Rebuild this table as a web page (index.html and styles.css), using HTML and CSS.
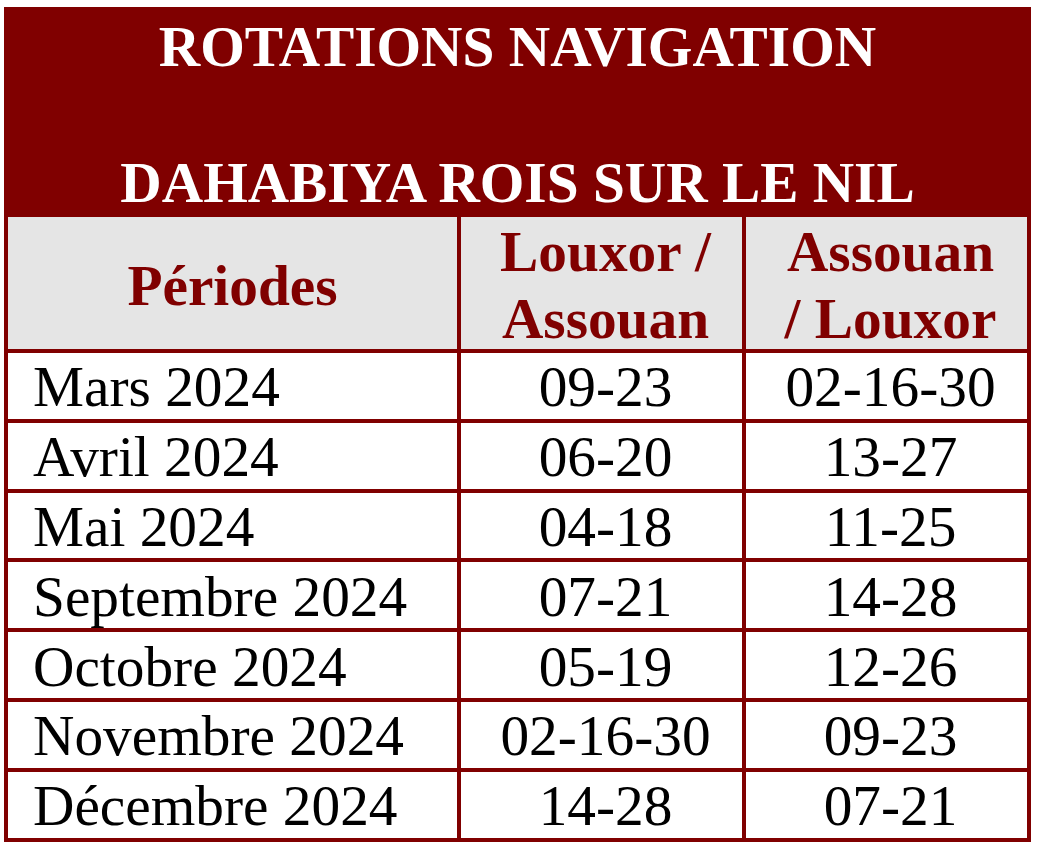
FILE: index.html
```html
<!DOCTYPE html>
<html lang="fr">
<head>
<meta charset="utf-8">
<title>Rotations navigation – Dahabiya Rois sur le Nil</title>
<link rel="stylesheet" href="styles.css">
</head>
<body>
<div class="schedule">
  <div class="title">ROTATIONS NAVIGATION<br><br>DAHABIYA ROIS SUR LE NIL</div>

  <div class="head">Périodes</div>
  <div class="head col">Louxor /<br>Assouan</div>
  <div class="head col">Assouan<br>/ Louxor</div>

  <div class="cell period">Mars 2024</div>
  <div class="cell col">09-23</div>
  <div class="cell col">02-16-30</div>

  <div class="cell period">Avril 2024</div>
  <div class="cell col">06-20</div>
  <div class="cell col">13-27</div>

  <div class="cell period">Mai 2024</div>
  <div class="cell col">04-18</div>
  <div class="cell col">11-25</div>

  <div class="cell period">Septembre 2024</div>
  <div class="cell col">07-21</div>
  <div class="cell col">14-28</div>

  <div class="cell period">Octobre 2024</div>
  <div class="cell col">05-19</div>
  <div class="cell col">12-26</div>

  <div class="cell period">Novembre 2024</div>
  <div class="cell col">02-16-30</div>
  <div class="cell col">09-23</div>

  <div class="cell period">Décembre 2024</div>
  <div class="cell col">14-28</div>
  <div class="cell col">07-21</div>
</div>
</body>
</html>
```

FILE: styles.css
```css
html, body {
  margin: 0;
  padding: 0;
  background: #ffffff;
}

body {
  font-family: "Liberation Serif", "Times New Roman", serif;
}

.schedule {
  box-sizing: border-box;
  margin: 7px 0 0 4px;
  width: 1027px;
  padding: 4px;
  display: grid;
  grid-template-columns: 449px 281px 281px;
  grid-template-rows: 202px 132px repeat(7, 65.8px);
  gap: 4px;
  background: #800000;
}

.title {
  grid-column: 1 / -1;
  box-sizing: border-box;
  padding-top: 2px;
  color: #ffffff;
  font-weight: bold;
  font-size: 57.33px;
  line-height: 68px;
  text-align: center;
  white-space: nowrap;
}

.head {
  box-sizing: border-box;
  display: flex;
  align-items: center;
  justify-content: center;
  text-align: center;
  padding-top: 6px;
  background: #e5e5e5;
  color: #800000;
  font-weight: bold;
  font-size: 57.33px;
  line-height: 66.7px;
  white-space: nowrap;
}

.cell {
  box-sizing: border-box;
  display: flex;
  align-items: center;
  padding-top: 3px;
  background: #ffffff;
  color: #000000;
  font-size: 57.33px;
  line-height: 64px;
  white-space: nowrap;
}

.period {
  padding-left: 25px;
}

.col {
  justify-content: center;
  padding-left: 10px;
  padding-right: 2px;
}
```
